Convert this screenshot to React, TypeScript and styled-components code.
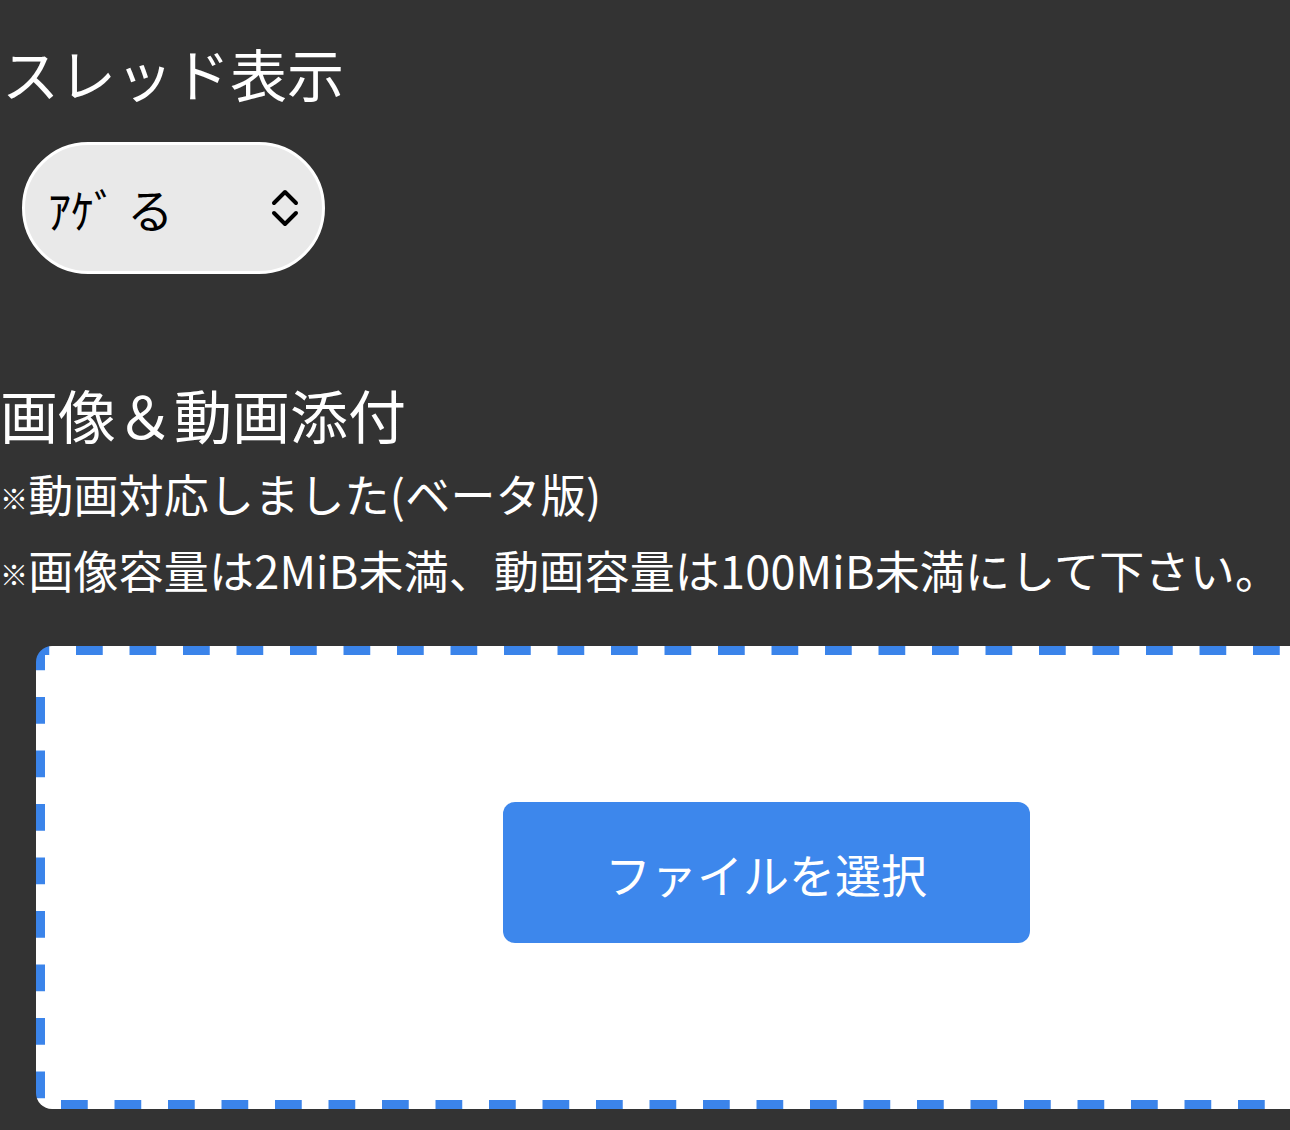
import styled, { createGlobalStyle } from "styled-components";

const GlobalStyle = createGlobalStyle`
    html, body {
        margin: 0;
        padding: 0;
        background-color: #333333;
        overflow: hidden;
    }
    body {
        font-family: "Noto Sans CJK JP", "Noto Sans", sans-serif;
        color: #ffffff;
    }
`;

const BLUE = "#3b84ea";

/* Styled-Components */
const Page = styled.div`
    width: 1290px;
    height: 1130px;
    display: flex;
    flex-direction: column;
`;

const Section = styled.section<{ top: number }>`
    display: flex;
    flex-direction: column;
    align-items: flex-start;
    margin-top: ${(props) => props.top}px;
`;

const Heading = styled.h2<{ indent?: number; size?: number }>`
    margin: 0 0 0 ${(props) => props.indent || 0}px;
    font-size: ${(props) => props.size || 57}px;
    font-weight: 400;
    line-height: 80px;
    white-space: nowrap;
`;

const SelectBox = styled.div`
    margin: 30px 0 0 22px;
    box-sizing: border-box;
    width: 303px;
    height: 132px;
    padding: 0 22px 0 23px;
    display: flex;
    align-items: center;
    justify-content: space-between;
    background-color: #e9e9e9;
    border: 3px solid #ffffff;
    border-radius: 66px;
    color: #000000;
    font-size: 46px;
    white-space: pre;
`;

const NoteList = styled.div`
    margin-top: 4px;
    display: flex;
    flex-direction: column;
`;

const Note = styled.p`
    margin: 0;
    font-size: 45px;
    letter-spacing: 0.2px;
    line-height: 72px;
    white-space: nowrap;
`;

const Mark = styled.span`
    font-size: 28px;
    vertical-align: 3px;
`;

const DropZone = styled.div`
    margin: 36px 0 0 36px;
    box-sizing: border-box;
    width: 1460px;
    height: 463px;
    flex-shrink: 0;
    display: flex;
    align-items: center;
    justify-content: center;
    padding-bottom: 10px;
    border-radius: 16px;
    background-color: #ffffff;
    background-image:
        linear-gradient(to right, ${BLUE} 0 27px, transparent 27px),
        linear-gradient(to right, ${BLUE} 0 27px, transparent 27px),
        linear-gradient(to bottom, ${BLUE} 0 27px, transparent 27px),
        linear-gradient(to bottom, ${BLUE} 0 27px, transparent 27px);
    background-size: 53.5px 9px, 53.5px 9px, 9px 53.5px, 9px 53.5px;
    background-repeat: repeat-x, repeat-x, repeat-y, repeat-y;
    background-position: 40px 0, 25px 100%, 0 51px, 100% 51px;
`;

const PickButton = styled.button`
    width: 527px;
    height: 141px;
    border: none;
    border-radius: 12px;
    background-color: #3d87ec;
    color: #ffffff;
    font-family: "Noto Sans CJK JP", "Noto Sans", sans-serif;
    font-size: 46px;
    cursor: pointer;
`;
/* end Styled-Components */

function Chevrons() {
    return (
        <svg width="30" height="40" viewBox="0 0 30 40" fill="none">
            <path d="M4 15 L15 4 L26 15" stroke="#000" strokeWidth="4" strokeLinecap="round" strokeLinejoin="round" />
            <path d="M4 25 L15 36 L26 25" stroke="#000" strokeWidth="4" strokeLinecap="round" strokeLinejoin="round" />
        </svg>
    );
}

function App() {
    return (
        <Page>
            <GlobalStyle />
            <Section top={32}>
                <Heading indent={2}>スレッド表示</Heading>
                <SelectBox>
                    <span>ｱｹﾞ る</span>
                    <Chevrons />
                </SelectBox>
            </Section>
            <Section top={100}>
                <Heading size={58}>画像＆動画添付</Heading>
                <NoteList>
                    <Note><Mark>※</Mark>動画対応しました(ベータ版)</Note>
                    <Note><Mark>※</Mark>画像容量は2MiB未満、動画容量は100MiB未満にして下さい。</Note>
                </NoteList>
            </Section>
            <DropZone>
                <PickButton>ファイルを選択</PickButton>
            </DropZone>
        </Page>
    );
}

export default App;
